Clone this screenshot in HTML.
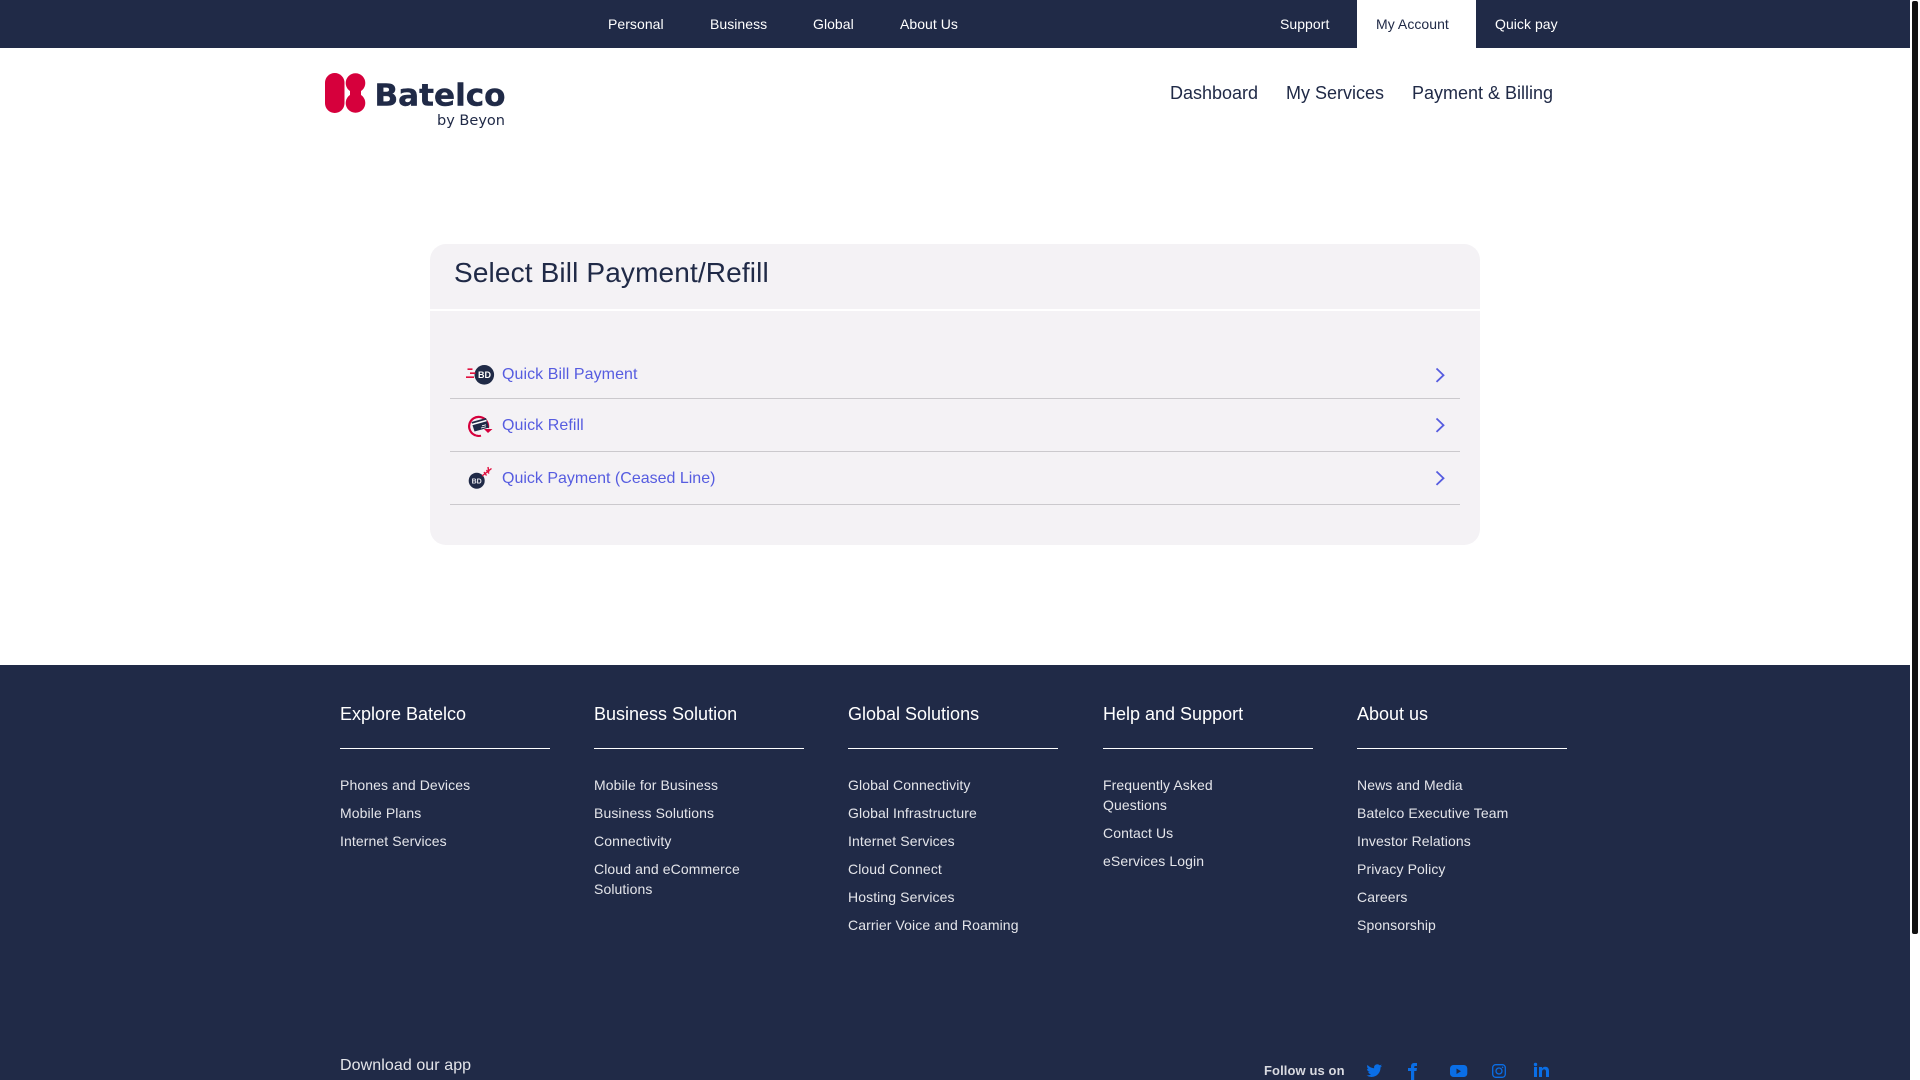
<!DOCTYPE html>
<html lang="en"><head><meta charset="utf-8"><title>Batelco</title>
<style>
html,body{margin:0;padding:0;width:1920px;height:1080px;overflow:hidden;background:#fff;font-family:"Liberation Sans",sans-serif}
.a{position:absolute;white-space:nowrap}
#page{position:relative;width:1920px;height:1080px;overflow:hidden}
.top{font-size:14px;line-height:20px;top:14px;color:#fff;letter-spacing:.05px}
.main{font-size:18px;line-height:24px;top:81px;color:#202a47}
.line{position:absolute;left:450px;width:1010px;height:1px;background:#cbc9cd}
.item{font-size:16px;line-height:20px;left:502px;color:#565ce0;letter-spacing:.07px}
.h{font-size:18px;line-height:24px;top:702px;color:#fff}
.r{position:absolute;top:748px;width:210px;height:1px;background:#fff}
.l{font-size:14px;line-height:20px;color:#e4e5ea;letter-spacing:.1px}
</style></head><body><div id="page">
<div class="a" style="left:0;top:0;width:1910px;height:48px;background:#202a47"></div>
<div class="a" style="left:1357px;top:0;width:119px;height:48px;background:#fff"></div>
<div class="a top" style="left:608px">Personal</div>
<div class="a top" style="left:710px">Business</div>
<div class="a top" style="left:813px">Global</div>
<div class="a top" style="left:900px">About Us</div>
<div class="a top" style="left:1280px">Support</div>
<div class="a top" style="left:1376px;color:#202a47">My Account</div>
<div class="a top" style="left:1495px">Quick pay</div>

<svg class="a" style="left:320px;top:65px" width="190" height="70" viewBox="0 0 190 70">
<rect x="5" y="8" width="19.500" height="40" rx="9.750" fill="#d6003c"/>
<circle cx="35.500" cy="18" r="9.800" fill="#d6003c"/><circle cx="35.500" cy="38" r="9.800" fill="#d6003c"/><rect x="30" y="24" width="11" height="8" fill="#d6003c"/>
<text x="54.500" y="40.500" font-family="DejaVu Sans" font-weight="700" font-size="30" fill="#202a47" stroke="#202a47" stroke-width=".4" textLength="131" lengthAdjust="spacingAndGlyphs">Batelco</text>
<text x="117" y="60" font-family="DejaVu Sans" font-size="14.500" fill="#202a47" textLength="68" lengthAdjust="spacingAndGlyphs">by Beyon</text>
</svg>

<div class="a main" style="left:1170px">Dashboard</div>
<div class="a main" style="left:1286px">My Services</div>
<div class="a main" style="left:1412px">Payment &amp; Billing</div>

<div class="a" style="left:430px;top:244px;width:1050px;height:301px;background:#f4f2f5;border-radius:16px"></div>
<div class="a" style="left:430px;top:309px;width:1050px;height:2px;background:#fff"></div>
<div class="a" style="left:454px;top:257px;font-size:28px;line-height:32px;color:#202a47;letter-spacing:.14px">Select Bill Payment/Refill</div>

<div class="a item" style="top:365px">Quick Bill Payment</div>
<div class="line" style="top:398px"></div>
<div class="a item" style="top:416px">Quick Refill</div>
<div class="line" style="top:451px"></div>
<div class="a item" style="top:469px;letter-spacing:0">Quick Payment (Ceased Line)</div>
<div class="line" style="top:504px"></div>

<svg class="a" style="left:460px;top:360px" width="40" height="140" viewBox="0 0 40 140">
<circle cx="24.300" cy="14.800" r="9.800" fill="#202a47"/>
<text x="24.500" y="18" text-anchor="middle" font-family="Liberation Sans" font-weight="700" font-size="9" fill="#fff">BD</text>
<path d="M7.500 9.200h5M10 13.200h5.500M6 17.200h8" stroke="#e0103f" stroke-width="1.700" fill="none"/>
<path d="M28 68a9.500 9.500 0 1 0-12 7.500" stroke="#d6003c" stroke-width="2.200" fill="none"/>
<path d="M16 75.500a9.500 9.500 0 0 0 5 .2" stroke="#d6003c" stroke-width="2" fill="none"/>
<path d="M11.500 62l14.500-4 3 9.500-14.500 4z" fill="#202a47"/>
<path d="M12 64.500l14.500-4" stroke="#fff" stroke-width="1.600"/>
<path d="M21 68l5-1.300M22 65.800l4-1" stroke="#fff" stroke-width=".8"/>
<path d="M24 69h8.500l-4.500 4z" fill="#d6003c"/>
<circle cx="16.700" cy="120.700" r="8" fill="#202a47"/>
<text x="16.700" y="123.300" text-anchor="middle" font-family="Liberation Sans" font-weight="700" font-size="7" fill="#e8e8ee">BD</text>
<path d="M22 116l9.500-7.500M24 112l2.500 3.500M26.500 110l2.500 3.500M28 107l.8 5" stroke="#e0103f" stroke-width="1.400" fill="none"/>
</svg>

<svg class="a" style="left:1434px;top:360px" width="12" height="130" viewBox="0 0 12 130" fill="none" stroke="#565ce0" stroke-width="1.800">
<path d="M2.500 8.500l7 6.700-7 6.700"/><path d="M2.500 58.500l7 6.700-7 6.700"/><path d="M2.500 111.500l7 6.700-7 6.700"/>
</svg>

<div class="a" style="left:0;top:665px;width:1910px;height:415px;background:#202a47"></div>
<div class="a h" style="left:340px">Explore Batelco</div>
<div class="a h" style="left:594px">Business Solution</div>
<div class="a h" style="left:848px">Global Solutions</div>
<div class="a h" style="left:1103px">Help and Support</div>
<div class="a h" style="left:1357px">About us</div>
<div class="r" style="left:340px"></div><div class="r" style="left:594px"></div><div class="r" style="left:848px"></div><div class="r" style="left:1103px"></div><div class="r" style="left:1357px"></div>

<div class="a l" style="left:340px;top:775px">Phones and Devices</div>
<div class="a l" style="left:340px;top:803px">Mobile Plans</div>
<div class="a l" style="left:340px;top:831px">Internet Services</div>

<div class="a l" style="left:594px;top:775px">Mobile for Business</div>
<div class="a l" style="left:594px;top:803px">Business Solutions</div>
<div class="a l" style="left:594px;top:831px">Connectivity</div>
<div class="a l" style="left:594px;top:859px">Cloud and eCommerce<br>Solutions</div>

<div class="a l" style="left:848px;top:775px">Global Connectivity</div>
<div class="a l" style="left:848px;top:803px">Global Infrastructure</div>
<div class="a l" style="left:848px;top:831px">Internet Services</div>
<div class="a l" style="left:848px;top:859px">Cloud Connect</div>
<div class="a l" style="left:848px;top:887px">Hosting Services</div>
<div class="a l" style="left:848px;top:915px">Carrier Voice and Roaming</div>

<div class="a l" style="left:1103px;top:775px">Frequently Asked<br>Questions</div>
<div class="a l" style="left:1103px;top:823px">Contact Us</div>
<div class="a l" style="left:1103px;top:851px">eServices Login</div>

<div class="a l" style="left:1357px;top:775px">News and Media</div>
<div class="a l" style="left:1357px;top:803px">Batelco Executive Team</div>
<div class="a l" style="left:1357px;top:831px">Investor Relations</div>
<div class="a l" style="left:1357px;top:859px">Privacy Policy</div>
<div class="a l" style="left:1357px;top:887px">Careers</div>
<div class="a l" style="left:1357px;top:915px">Sponsorship</div>

<div class="a" style="left:340px;top:1056px;font-size:16px;line-height:20px;color:#e4e5ea;letter-spacing:.08px">Download our app</div>
<div class="a" style="left:1264px;top:1061px;font-size:13px;line-height:20px;font-weight:700;color:#d9dae0;letter-spacing:.1px">Follow us on</div>

<svg class="a" style="left:1360px;top:1060px" width="195" height="20" viewBox="0 0 195 20" fill="#0a6ee6">
<g transform="translate(6.500,2.800) scale(.65)"><path d="M23.950 4.570a10 10 0 0 1-2.820.770 4.960 4.960 0 0 0 2.160-2.720c-.950.550-2 .960-3.120 1.190a4.920 4.920 0 0 0-8.380 4.480C7.690 8.090 4.070 6.130 1.640 3.160a4.820 4.820 0 0 0-.670 2.480c0 1.710.870 3.210 2.190 4.100a4.900 4.900 0 0 1-2.230-.620v.060a4.920 4.920 0 0 0 3.950 4.830 5 5 0 0 1-2.210.080 4.940 4.940 0 0 0 4.600 3.420 9.870 9.870 0 0 1-6.100 2.100c-.390 0-.780-.020-1.170-.070a13.900 13.900 0 0 0 7.550 2.210c9.050 0 14-7.500 14-13.980 0-.210 0-.420-.020-.630a9.940 9.940 0 0 0 2.470-2.550z"/></g>
<path d="M51 20v-9h-3v-3h3V6.500c0-2.600 1.500-3.500 3.500-3.500H57v3h-1.500c-1 0-1.300.4-1.300 1.300V8H57l-.5 3h-2.300v9z"/>
<rect x="90" y="5" width="17.300" height="12" rx="3.500"/><path d="M96.500 8.500v5.500l4.500-2.700z" fill="#202a47"/>
<rect x="132.700" y="4.700" width="12.600" height="12.600" rx="3" fill="none" stroke="#0a6ee6" stroke-width="1.300"/><circle cx="139" cy="11" r="3" fill="none" stroke="#0a6ee6" stroke-width="1.300"/><circle cx="142.600" cy="7.300" r=".8"/>
<rect x="174" y="7" width="3" height="10"/><circle cx="175.500" cy="4.500" r="1.700"/><path d="M179 7h3v1.500c.7-1.100 1.800-1.700 3.200-1.700 2.500 0 3.800 1.600 3.800 4.300V17h-3v-5.400c0-1.400-.6-2.200-1.800-2.200s-2.200.8-2.200 2.400V17h-3z"/>
</svg>

<div class="a" style="left:1912px;top:1px;width:6px;height:933px;background:#111;border-radius:2px"></div>
</div></body></html>
